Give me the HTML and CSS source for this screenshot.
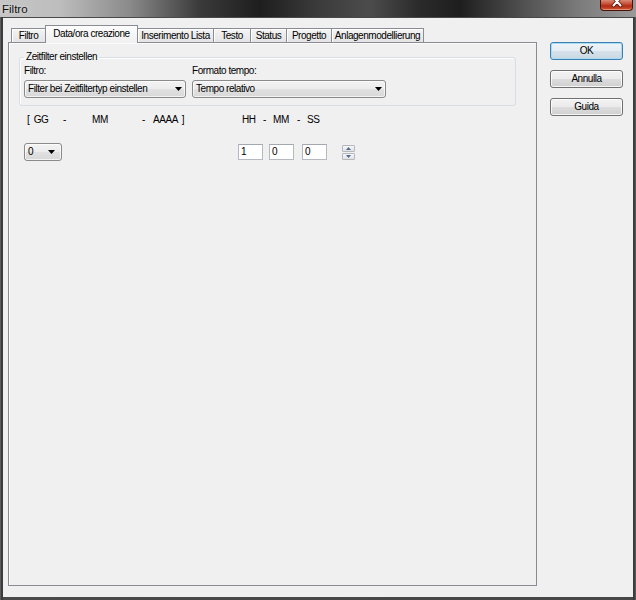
FILE: index.html
```html
<!DOCTYPE html>
<html>
<head>
<meta charset="utf-8">
<link rel="stylesheet" href="styles.css">
</head>
<body>
<div class="window">
  <div class="titlebar">
    <span class="title">Filtro</span>
    <div class="close">
      <svg width="32" height="11" viewBox="0 0 32 11">
        <path d="M12.5 -2.5 L19.5 5.5 M19.5 -2.5 L12.5 5.5" stroke="#5a1408" stroke-width="3.6" stroke-linecap="round"/>
        <path d="M12.5 -2.5 L19.5 5.5 M19.5 -2.5 L12.5 5.5" stroke="#ffffff" stroke-width="2" stroke-linecap="round"/>
      </svg>
    </div>
  </div>
  <div class="client">
    <div class="tabctl">
      <div class="tabstrip">
        <div class="tab t-filtro">Filtro</div>
        <div class="tab sel t-data">Data/ora creazione</div>
        <div class="tab t-ins">Inserimento Lista</div>
        <div class="tab t-testo">Testo</div>
        <div class="tab t-status">Status</div>
        <div class="tab t-prog">Progetto</div>
        <div class="tab t-anl">Anlagenmodellierung</div>
      </div>
      <div class="pane">
        <fieldset class="group">
          <legend>Zeitfilter einstellen</legend>
          <div class="fields">
            <div class="field f1">
              <div class="lbl">Filtro:</div>
              <div class="combo"><span>Filter bei Zeitfiltertyp einstellen</span><svg class="arrow" width="7" height="4" viewBox="0 0 7 4"><path d="M0 0H7L3.5 4z" fill="#000"/></svg></div>
            </div>
            <div class="field f2">
              <div class="lbl">Formato tempo:</div>
              <div class="combo"><span>Tempo relativo</span><svg class="arrow" width="7" height="4" viewBox="0 0 7 4"><path d="M0 0H7L3.5 4z" fill="#000"/></svg></div>
            </div>
          </div>
        </fieldset>
        <div class="datelabels">
          <span class="d1">[ GG</span>
          <span class="d2">-</span>
          <span class="d3">MM</span>
          <span class="d4">-</span>
          <span class="d5">AAAA ]</span>
          <span class="d6">HH</span>
          <span class="d7">-</span>
          <span class="d8">MM</span>
          <span class="d9">-</span>
          <span class="d10">SS</span>
        </div>
        <div class="controls">
          <div class="combo small"><span>0</span><svg class="arrow" width="7" height="4" viewBox="0 0 7 4"><path d="M0 0H7L3.5 4z" fill="#000"/></svg></div>
          <div class="edit e1">1</div>
          <div class="edit e2">0</div>
          <div class="edit e3">0</div>
          <div class="spin">
            <div class="spinbtn"><svg width="5" height="3" viewBox="0 0 5 3"><path d="M0 3H5L2.5 0z" fill="#4e6a92"/></svg></div>
            <div class="spinbtn"><svg width="5" height="3" viewBox="0 0 5 3"><path d="M0 0H5L2.5 3z" fill="#4e6a92"/></svg></div>
          </div>
        </div>
      </div>
    </div>
    <div class="buttons">
      <div class="btn default">OK</div>
      <div class="btn">Annulla</div>
      <div class="btn">Guida</div>
    </div>
  </div>
</div>
</body>
</html>
```
FILE: styles.css
```css
* { box-sizing: border-box; }
html, body { margin: 0; padding: 0; }
body {
  width: 636px;
  height: 600px;
  overflow: hidden;
  background: #3e3e3e;
  font-family: "Liberation Sans", Arial, sans-serif;
  font-size: 10px;
  letter-spacing: -0.45px;
  color: #000;
}
.window {
  width: 636px;
  height: 600px;
  display: flex;
  flex-direction: column;
  background: linear-gradient(90deg, #6e6e6e 0, #4a4a4a 1px, #2e2e2e 2px, #4a4a4a 3px, #474747 633px, #2e2e2e 634px, #555 635px);
}
.titlebar {
  height: 17px;
  flex: none;
  display: flex;
  justify-content: space-between;
  align-items: flex-start;
  background: linear-gradient(90deg, #c6c6c6 0, #bdbdbd 60px, #8a8a8a 130px, #3a3a3a 200px, #1e1e1e 260px, #3c3c3c 320px, #4c4c4c 370px, #2a2a2a 420px, #1e1e1e 460px, #4e4e4e 520px, #7c7c7c 580px, #9a9a9a 636px);
}
.title {
  font-size: 11.5px;
  letter-spacing: 0;
  line-height: 18px;
  padding-left: 2px;
  color: #111;
  text-shadow: 0 0 4px rgba(255,255,255,0.6);
}
.close {
  width: 33px;
  height: 11px;
  margin-right: 3px;
  border: 1px solid #4a1208;
  border-top: none;
  border-radius: 0 0 4px 4px;
  background: linear-gradient(#d98a78 0, #c9553c 35%, #b32b15 60%, #cf5a36 100%);
  box-shadow: inset 0 -1px 0 rgba(255,200,170,0.5);
  overflow: hidden;
}
.close svg { display: block; }
.client {
  flex: 1;
  margin: 1px 3px 3px 3px;
  background: #f0f0f0;
  display: flex;
  column-gap: 13px;
  padding: 7px 10px 11px 5px;
}
.tabctl {
  width: 529px;
  flex: none;
  display: flex;
  flex-direction: column;
}
.tabstrip {
  height: 17px;
  flex: none;
  display: flex;
  align-items: flex-end;
  padding-left: 3px;
}
.tab {
  height: 14px;
  border: 1px solid #898c95;
  border-bottom: none;
  background: linear-gradient(#f4f4f4, #e4e4e4);
  box-shadow: inset 1px 1px 0 #fff;
  display: flex;
  align-items: center;
  justify-content: center;
  line-height: 12px;
  white-space: nowrap;
}
.tab + .tab { margin-left: -1px; }
.tab.sel {
  height: 18px;
  margin-bottom: -1px;
  padding-bottom: 2px;
  background: linear-gradient(#fdfdfd, #f3f3f3 70%, #f0f0f0);
  box-shadow: none;
  position: relative;
  z-index: 1;
}
.t-filtro { width: 35px; }
.t-data { width: 93px; }
.t-ins { width: 77px; }
.t-testo { width: 38px; }
.t-status { width: 37px; }
.t-prog { width: 46px; }
.t-anl { width: 93px; }
.pane {
  flex: 1;
  border: 1px solid #898c95;
  background: #f0f0f0;
  box-shadow: inset 1px 1px 0 #fbfbfb;
  padding: 8px 0 0 10px;
}
.group {
  width: 497px;
  margin: 0;
  min-width: 0;
  padding: 2px 8px 7px 4px;
  border: 1px solid #d5dfe5;
  border-radius: 3px;
  box-shadow: inset 1px 1px 0 #fff;
}
.group legend {
  padding: 0 2px;
  line-height: 12px;
}
.fields {
  display: flex;
  column-gap: 6px;
}
.lbl {
  line-height: 12px;
  margin-bottom: 3px;
}
.f1 { width: 162px; }
.f2 { width: 194px; }
.combo {
  height: 18px;
  border: 1px solid #8a8a8a;
  border-radius: 3px;
  background: linear-gradient(#f3f3f3 0, #ececec 50%, #e1e1e1 51%, #d8d8d8 100%);
  box-shadow: inset 0 0 0 1px rgba(255,255,255,0.7);
  display: flex;
  align-items: center;
  justify-content: space-between;
  padding: 0 3px 0 3px;
  line-height: 12px;
  white-space: nowrap;
}
.combo .arrow { flex: none; }
.combo.small {
  width: 38px;
  padding-right: 6px;
}
.datelabels {
  display: flex;
  margin: 8px 0 0 8px;
  line-height: 12px;
  white-space: pre;
  word-spacing: 2px;
}
.datelabels span { flex: none; }
.d1 { width: 36px; }
.d2 { width: 29px; }
.d3 { width: 50px; }
.d4 { width: 11px; }
.d5 { width: 89px; }
.d6 { width: 21px; }
.d7 { width: 10px; }
.d8 { width: 24px; }
.d9 { width: 10px; }
.controls {
  display: flex;
  align-items: center;
  margin: 17px 0 0 5px;
}
.edit {
  width: 25px;
  height: 16px;
  border: 1px solid #b5b9c2;
  border-top-color: #a3a7b0;
  background: #fff;
  line-height: 14px;
  padding-left: 2px;
}
.e1 { margin-left: 176px; }
.e2 { margin-left: 6px; }
.e3 { margin-left: 8px; }
.spin {
  margin-left: 15px;
  display: flex;
  flex-direction: column;
  row-gap: 1px;
}
.spinbtn {
  width: 13px;
  height: 7px;
  border: 1px solid #b4b8bf;
  border-radius: 1px;
  background: linear-gradient(#f7f7f7, #e2e2e2);
  display: flex;
  align-items: center;
  justify-content: center;
}
.spinbtn svg { display: block; }
.buttons {
  width: 73px;
  flex: none;
  display: flex;
  flex-direction: column;
  row-gap: 10px;
  padding-top: 17px;
}
.btn {
  height: 18px;
  border: 1px solid #707070;
  border-radius: 3px;
  background: linear-gradient(#f2f2f2 0, #ebebeb 50%, #dddddd 51%, #cfcfcf 100%);
  box-shadow: inset 0 0 0 1px rgba(255,255,255,0.8);
  display: flex;
  align-items: center;
  justify-content: center;
  line-height: 12px;
}
.btn.default {
  border-color: #3c7fb1;
  background: linear-gradient(#eef4f8 0, #e4edf3 50%, #d6e1ea 51%, #cad8e3 100%);
  box-shadow: inset 0 0 0 1px #a8dcf5;
}
```
